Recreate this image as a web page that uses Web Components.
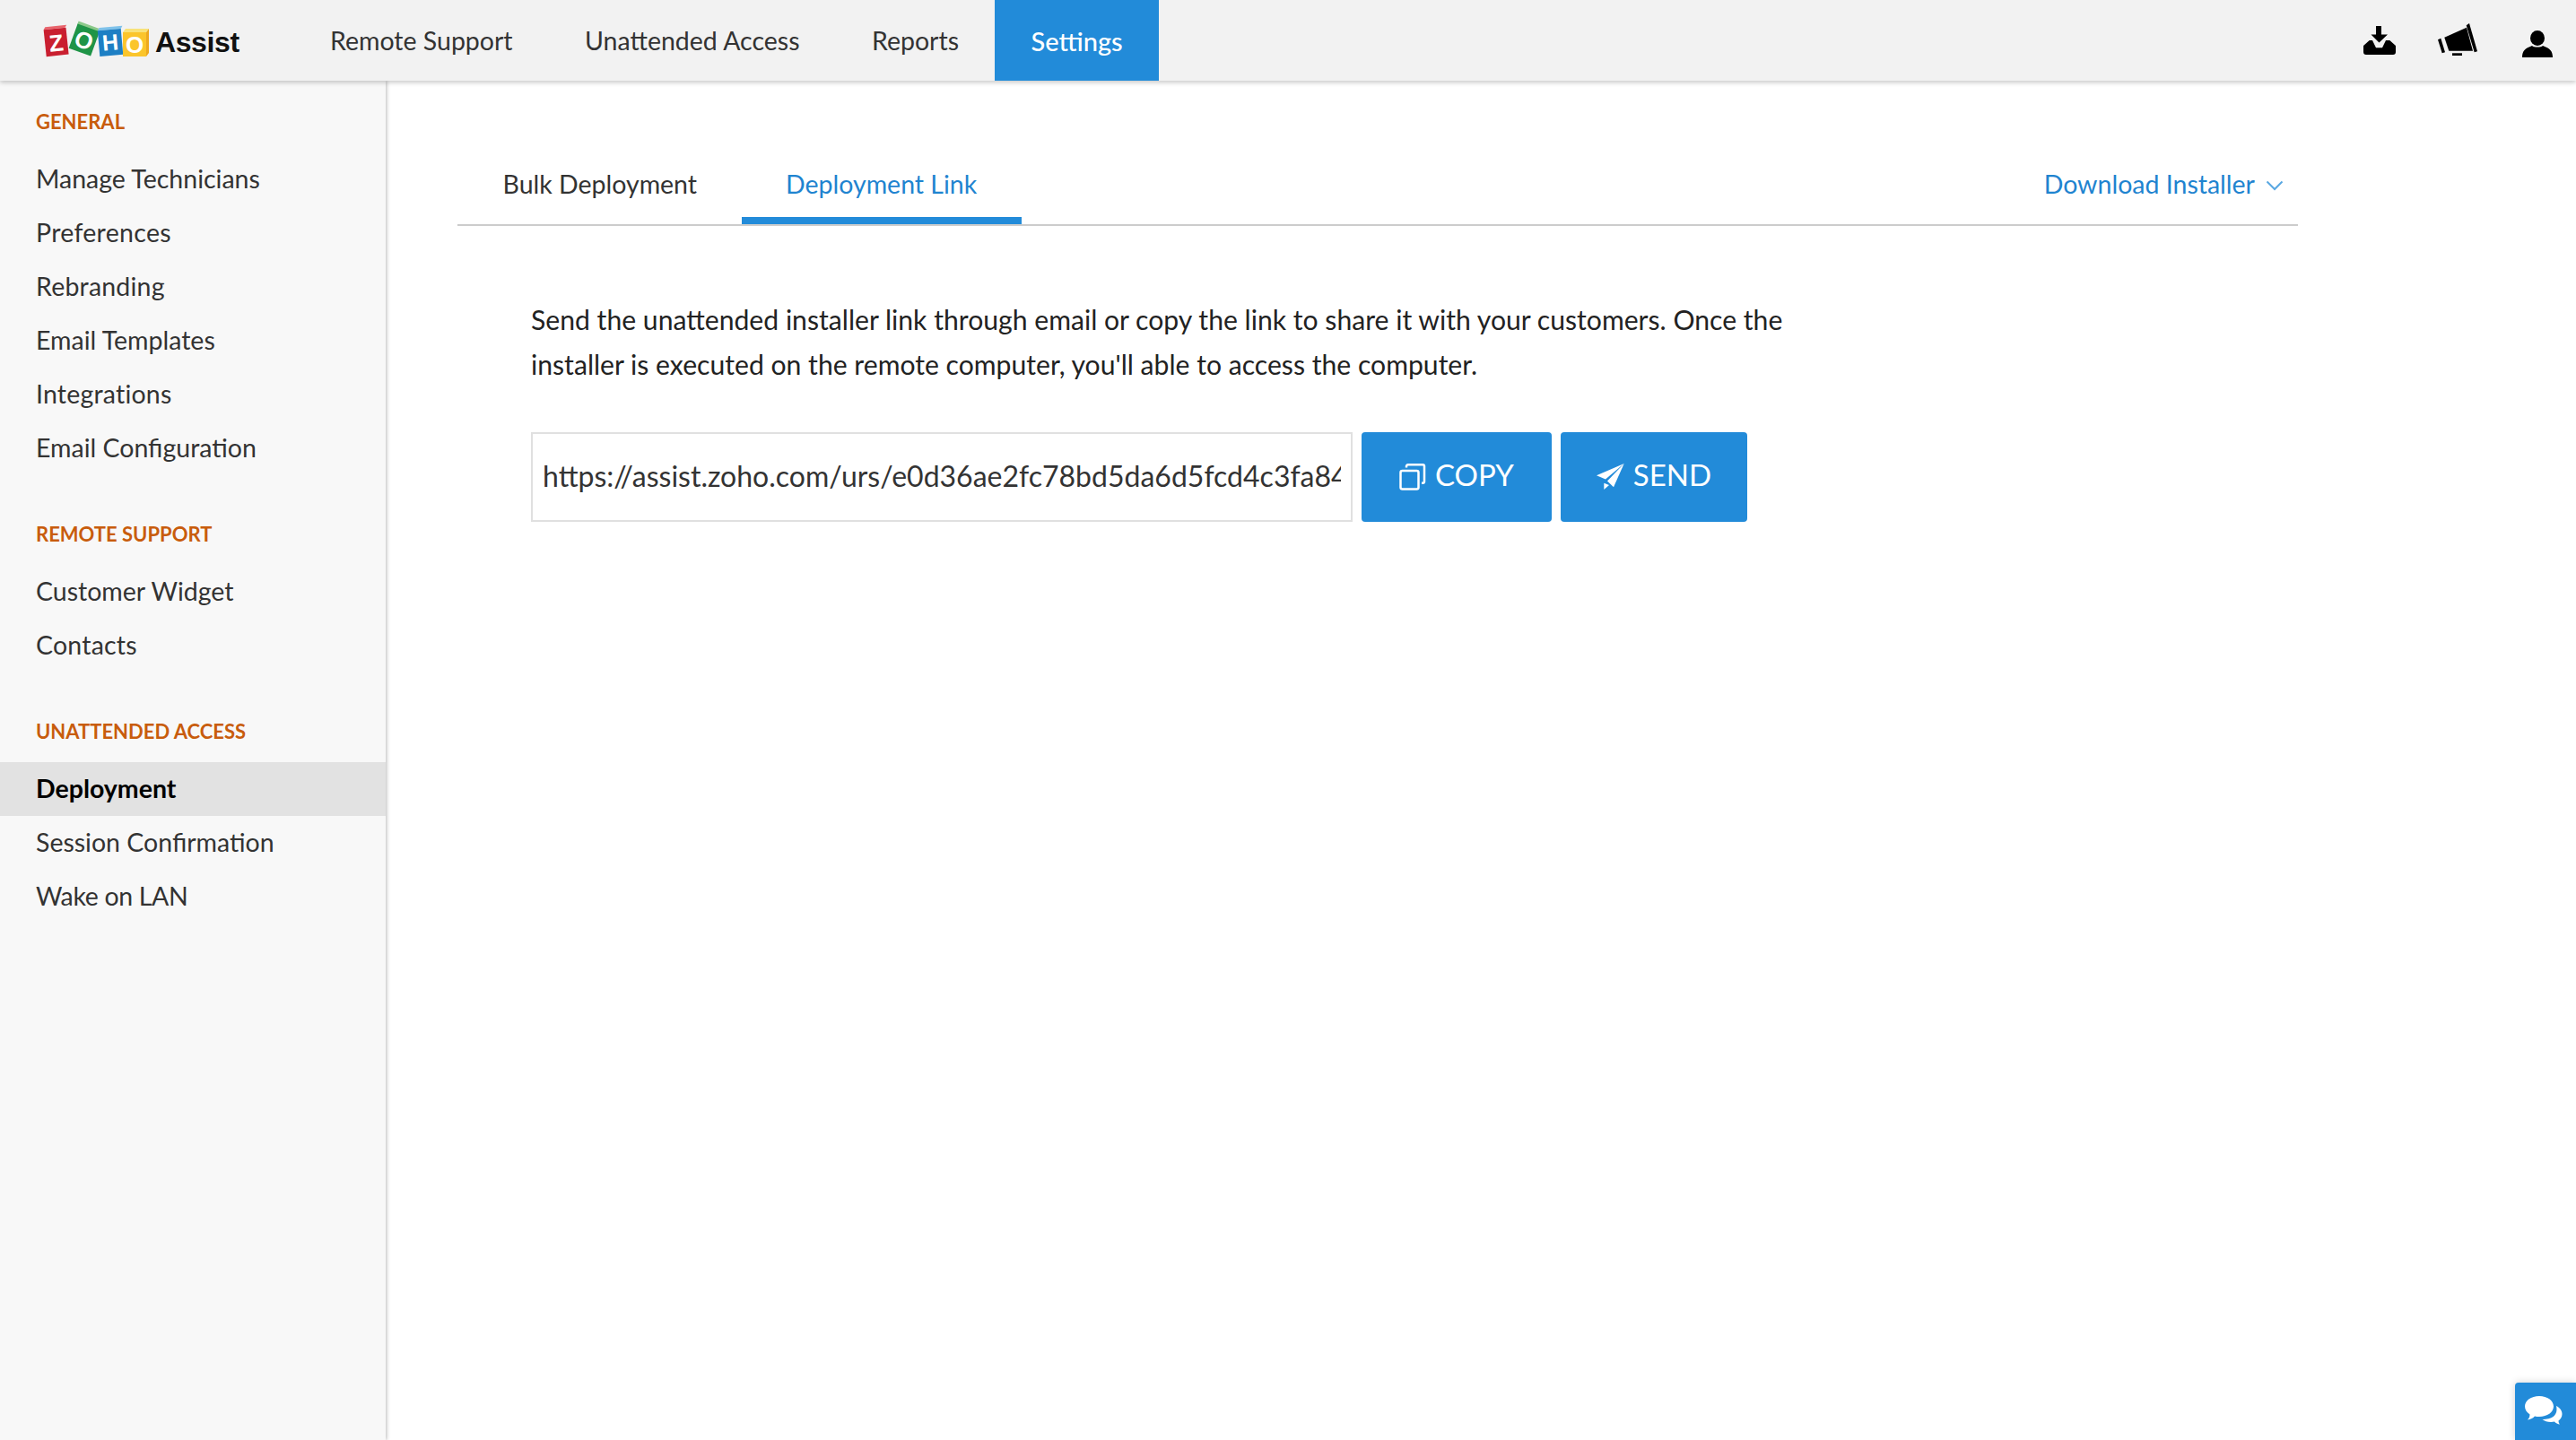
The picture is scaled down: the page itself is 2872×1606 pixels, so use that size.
<!DOCTYPE html>
<html lang="en">
<head>
<meta charset="utf-8">
<title>Zoho Assist - Deployment</title>
<style>
  html, body { margin: 0; height: 100%; background: #fff; overflow: hidden; }
  body { font-family: Lato, "Liberation Sans", sans-serif; color: #333; }
</style>
</head>
<body>
<assist-app>
  <assist-header slot="header">
    <top-link>Remote Support</top-link>
    <top-link>Unattended Access</top-link>
    <top-link>Reports</top-link>
    <top-link active>Settings</top-link>
  </assist-header>
  <side-nav slot="side">
    <side-group title="GENERAL">
      <side-link>Manage Technicians</side-link>
      <side-link style="letter-spacing:.3px">Preferences</side-link>
      <side-link style="letter-spacing:.2px">Rebranding</side-link>
      <side-link>Email Templates</side-link>
      <side-link style="letter-spacing:.2px">Integrations</side-link>
      <side-link>Email Configuration</side-link>
    </side-group>
    <side-group title="REMOTE SUPPORT">
      <side-link>Customer Widget</side-link>
      <side-link style="letter-spacing:.2px">Contacts</side-link>
    </side-group>
    <side-group title="UNATTENDED ACCESS">
      <side-link active>Deployment</side-link>
      <side-link>Session Confirmation</side-link>
      <side-link style="letter-spacing:-.33px">Wake on LAN</side-link>
    </side-group>
  </side-nav>
  <deploy-page slot="main">
    <tab-bar>
      <tab-item>Bulk Deployment</tab-item>
      <tab-item active>Deployment Link</tab-item>
      <installer-menu slot="end">Download Installer</installer-menu>
    </tab-bar>
    <link-panel>
      Send the unattended installer link through email or copy the link to share it with your customers. Once the installer is executed on the remote computer, you'll able to access the computer.
    </link-panel>
  </deploy-page>
  <chat-fab slot="fab"></chat-fab>
</assist-app>

<script>
class AssistApp extends HTMLElement {
  connectedCallback() {
    this.attachShadow({ mode: 'open' });
    this.shadowRoot.innerHTML = `
      <style>
        :host { display: flex; flex-direction: column; height: 1606px; position: relative; overflow: hidden; }
        .body { display: flex; flex: 1; min-height: 0; }
      </style>
      <slot name="header"></slot>
      <div class="body">
        <slot name="side"></slot>
        <slot name="main"></slot>
      </div>
      <slot name="fab"></slot>
    `;
  }
}

class AssistHeader extends HTMLElement {
  connectedCallback() {
    this.attachShadow({ mode: 'open' });
    this.shadowRoot.innerHTML = `
      <style>
        :host {
          display: flex;
          align-items: stretch;
          height: 90px;
          background: #f2f2f2;
          box-shadow: 0 2px 5px rgba(0, 0, 0, 0.22);
          position: relative;
          z-index: 3;
        }
        .logo { display: flex; align-items: flex-start; width: 328px; flex: none; }
        .logo svg { display: block; }
        nav { display: flex; align-items: stretch; flex: 1; }
        .tools { display: flex; align-items: flex-start; padding-right: 26px; }
        .tools svg { display: block; fill: #000; }
        .dl { margin-top: 29px; }
        .horn { margin-top: 26px; margin-left: 47px; }
        .me { margin-top: 34px; margin-left: 50px; }
      </style>
      <div class="logo">
        <svg width="280" height="90" viewBox="0 0 280 90">
          <g font-family="Liberation Sans, sans-serif" font-weight="700" text-anchor="middle" fill="#fff">
            <g transform="rotate(-6 62 46)">
              <path d="M50 32h24l2 -3h-24z" fill="#e8646c"/>
              <rect x="50" y="32" width="25" height="30" fill="#c91f30"/>
              <text x="62.500" y="57" font-size="26">Z</text>
            </g>
            <g transform="rotate(20 94 44)">
              <path d="M81 27h26l-2 4h-24z" fill="#8cc98a"/>
              <rect x="81" y="30" width="26" height="29" fill="#1f9447"/>
              <text x="94" y="54" font-size="26">O</text>
            </g>
            <g transform="rotate(-5 123 47)">
              <path d="M110 33h26l2 -3h-26z" fill="#7fc2ea"/>
              <rect x="110" y="33" width="26" height="29" fill="#1d7fc4"/>
              <text x="123" y="56" font-size="25">H</text>
            </g>
            <path d="M137 36l3 -4h26l-3 4z" fill="#f8e27a"/>
            <path d="M163 36l3 -4v27l-3 4z" fill="#eda91f"/>
            <rect x="137" y="36" width="26" height="27" fill="#fbc52c"/>
            <text x="150" y="59" font-size="26">O</text>
          </g>
          <text x="173" y="58" font-family="Liberation Sans, sans-serif" font-weight="700" font-size="32" letter-spacing="-.4" fill="#111">Assist</text>
        </svg>
      </div>
      <nav><slot></slot></nav>
      <div class="tools">
        <svg class="dl" width="36" height="32" viewBox="0 0 36 32">
          <path d="M14 0h6v9.500h7L17.500 18.500 8.500 9.500H14z"/>
          <path d="M0 22L6.700 16H10L14 24.300H21L25 16H29.300L36 22V29a3 3 0 0 1-3 3H3a3 3 0 0 1-3-3z"/>
        </svg>
        <svg class="horn" width="44" height="37" viewBox="0 0 44 37">
          <path d="M7.300 15.700L32 4.700 39 30.700H12.300z"/>
          <path d="M0 18.300L3.300 16.700 8 32.300 4.700 33.300z"/>
          <path d="M31.700 2.300L35 0 44 31.300 40.700 32.300z"/>
          <rect x="16" y="33.300" width="11" height="2.700"/>
        </svg>
        <svg class="me" width="34" height="30" viewBox="0 0 34 30">
          <ellipse cx="17" cy="8.500" rx="8" ry="8.500"/>
          <path d="M0 30c0-7 3-10 11-13 2 2 10 2 12 0 8 3 11 6 11 13z"/>
        </svg>
      </div>
    `;
  }
}

class TopLink extends HTMLElement {
  connectedCallback() {
    this.attachShadow({ mode: 'open' });
    this.shadowRoot.innerHTML = `
      <style>
        :host {
          display: flex;
          align-items: center;
          padding: 0 40.500px;
          margin-left: -.500px;
          font-size: 28.500px;
          color: #333;
        }
        :host([active]) { background: #228bd9; color: #fff; font-size: 29px; font-weight: 500; }
      </style>
      <slot></slot>
    `;
  }
}

class SideNav extends HTMLElement {
  connectedCallback() {
    this.attachShadow({ mode: 'open' });
    this.shadowRoot.innerHTML = `
      <style>
        :host {
          display: block;
          flex: none;
          width: 430px;
          padding-top: 25px;
          background: #f8f8f8;
          box-shadow: 1px 0 4px rgba(0, 0, 0, 0.28);
          position: relative;
          z-index: 2;
        }
      </style>
      <slot></slot>
    `;
  }
}

class SideGroup extends HTMLElement {
  connectedCallback() {
    this.attachShadow({ mode: 'open' });
    this.shadowRoot.innerHTML = `
      <style>
        :host { display: block; margin-bottom: 46px; }
        h4 {
          margin: 0 0 13px;
          padding: 1px 0 0 40px;
          font-size: 22px;
          line-height: 40px;
          font-weight: 700;
          color: #c85c0c;
        }
      </style>
      <h4>${this.getAttribute('title')}</h4>
      <slot></slot>
    `;
  }
}

class SideLink extends HTMLElement {
  connectedCallback() {
    this.attachShadow({ mode: 'open' });
    this.shadowRoot.innerHTML = `
      <style>
        :host {
          display: block;
          height: 60px;
          line-height: 60px;
          padding-left: 40px;
          font-size: 28.500px;
          color: #333;
        }
        /* grey band sits 1px lower than the text row */
        :host([active]) {
          background: linear-gradient(transparent 1px, #e2e2e2 1px);
          box-shadow: 0 1px 0 #e2e2e2;
          color: #000;
          font-weight: 700;
        }
      </style>
      <slot></slot>
    `;
  }
}

class DeployPage extends HTMLElement {
  connectedCallback() {
    this.attachShadow({ mode: 'open' });
    this.shadowRoot.innerHTML = `
      <style>
        :host { display: block; flex: 1; min-width: 0; padding: 70px 310px 0 80px; background: #fff; }
      </style>
      <slot></slot>
    `;
  }
}

class TabBar extends HTMLElement {
  connectedCallback() {
    this.attachShadow({ mode: 'open' });
    this.shadowRoot.innerHTML = `
      <style>
        :host {
          display: flex;
          align-items: stretch;
          justify-content: space-between;
          height: 90px;
          border-bottom: 2px solid #ccc;
        }
        .tabs { display: flex; align-items: stretch; padding-left: 1px; }
      </style>
      <div class="tabs"><slot></slot></div>
      <slot name="end"></slot>
    `;
  }
}

class TabItem extends HTMLElement {
  connectedCallback() {
    this.attachShadow({ mode: 'open' });
    this.shadowRoot.innerHTML = `
      <style>
        :host {
          display: flex;
          align-items: center;
          padding: 8px 49.500px 0;
          font-size: 28.500px;
          color: #333;
          border-bottom: 8px solid transparent;
        }
        :host([active]) { color: #1f84d0; border-bottom-color: #228bd9; }
      </style>
      <slot></slot>
    `;
  }
}

class InstallerMenu extends HTMLElement {
  connectedCallback() {
    this.attachShadow({ mode: 'open' });
    this.shadowRoot.innerHTML = `
      <style>
        :host {
          display: flex;
          align-items: center;
          gap: 12px;
          padding-right: 16px;
          font-size: 28.500px;
          color: #1f84d0;
        }
        svg { display: block; fill: none; stroke: #5aa8e2; stroke-width: 2; margin-top: 4px; }
      </style>
      <slot></slot>
      <svg width="20" height="12" viewBox="0 0 20 12"><path d="M1.500 1.500L10 10l8.500-8.500"/></svg>
    `;
  }
}

class LinkPanel extends HTMLElement {
  connectedCallback() {
    this.attachShadow({ mode: 'open' });
    this.shadowRoot.innerHTML = `
      <style>
        :host { display: block; padding: 79px 0 0 82px; }
        p { margin: 0 0 51px; width: 1440px; font-size: 30.150px; line-height: 50px; color: #222; }
        .row { display: flex; gap: 10px; }
        .url {
          box-sizing: border-box;
          width: 916px;
          height: 100px;
          padding: 0 11px 3px;
          border: 2px solid #e0e0e0;
          display: flex;
          align-items: center;
        }
        .url span {
          display: block;
          overflow: hidden;
          white-space: nowrap;
          font-size: 32px;
          color: #333;
        }
      </style>
      <p><slot></slot></p>
      <div class="row">
        <div class="url"><span>https://assist.zoho.com/urs/e0d36ae2fc78bd5da6d5fcd4c3fa84c1</span></div>
        <blue-button style="width:212px">
          <svg slot="icon" width="30" height="30" viewBox="0 0 30 30" fill="none" stroke="#fff" stroke-width="2.500">
            <rect x="1.500" y="8" width="20" height="20.500" rx="2"/>
            <path d="M8 4.500V3a1.700 1.700 0 0 1 1.700-1.700h16.600A1.700 1.700 0 0 1 28 3v17a1.700 1.700 0 0 1-1.700 1.700H25"/>
          </svg>
          COPY
        </blue-button>
        <blue-button style="width:208px">
          <svg slot="icon" width="31" height="30" viewBox="0 0 31 30" fill="#fff">
            <path d="M0 13.300L30.700 0 10 17.500z"/>
            <path d="M30.700 0L19 26.300 12 19.500z"/>
            <path d="M8.300 21.700L14 24 8.300 29z"/>
          </svg>
          SEND
        </blue-button>
      </div>
    `;
  }
}

class BlueButton extends HTMLElement {
  connectedCallback() {
    this.attachShadow({ mode: 'open' });
    this.shadowRoot.innerHTML = `
      <style>
        :host {
          display: flex;
          align-items: center;
          justify-content: center;
          gap: 10px;
          box-sizing: border-box;
          height: 100px;
          background: #228bd9;
          border-radius: 4px;
          color: #fff;
          font-size: 33px;
        }
        .label { margin-top: -6px; }
      </style>
      <slot name="icon"></slot>
      <span class="label"><slot></slot></span>
    `;
  }
}

class ChatFab extends HTMLElement {
  connectedCallback() {
    this.attachShadow({ mode: 'open' });
    this.shadowRoot.innerHTML = `
      <style>
        :host {
          position: absolute;
          right: 0;
          bottom: 0;
          width: 68px;
          height: 64px;
          background: #228bd9;
          border-top-left-radius: 4px;
          box-shadow: 0 0 8px rgba(0, 0, 0, 0.18);
          z-index: 4;
        }
        svg { position: absolute; left: 11px; top: 15px; display: block; fill: #fff; }
      </style>
      <svg width="42" height="32" viewBox="0 0 42 32">
        <path d="M16 0c9 0 16 5 16 11.500S25 23 16 23c-2 0-3.500-.2-5-.6C8.500 25 6 26 3 26.500c1.500-1.500 2.500-3.500 2.500-6C2 18 0 15 0 11.500 0 5 7 0 16 0z"/>
        <path d="M35 11c4 2 6.500 5 6.500 9 0 3-1.500 5.500-4 7.500 0 1.500.5 3 1.500 4-2.500-.3-4.500-1.300-6-3-1 .3-2.500.4-4 .4-4 0-7-1-9.500-3 10 0 18-4 15.500-15z"/>
      </svg>
    `;
  }
}

customElements.define('assist-app', AssistApp);
customElements.define('assist-header', AssistHeader);
customElements.define('top-link', TopLink);
customElements.define('side-nav', SideNav);
customElements.define('side-group', SideGroup);
customElements.define('side-link', SideLink);
customElements.define('deploy-page', DeployPage);
customElements.define('tab-bar', TabBar);
customElements.define('tab-item', TabItem);
customElements.define('installer-menu', InstallerMenu);
customElements.define('link-panel', LinkPanel);
customElements.define('blue-button', BlueButton);
customElements.define('chat-fab', ChatFab);
</script>
</body>
</html>
